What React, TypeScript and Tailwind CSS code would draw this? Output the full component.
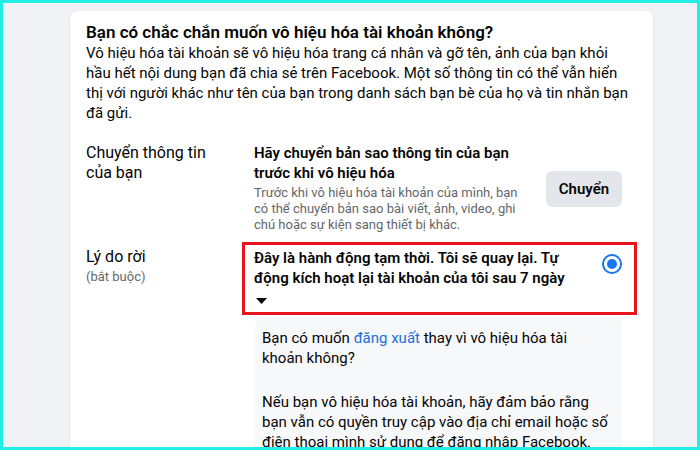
export default function App() {
  return (
    <div className="h-[450px] w-[700px] overflow-hidden border-[3px] border-[#22eee6] bg-[#f0f2f5] font-['Roboto',sans-serif] text-[#050505]">
      <div className="ml-[67px] mt-2 w-[583px] rounded-lg bg-white px-4 pb-10 pt-[10px] shadow-[0_1px_2px_rgba(0,0,0,0.12)]">
        <h2 className="text-[17px] font-semibold leading-[22px]">
          Bạn có chắc chắn muốn vô hiệu hóa tài khoản không?
        </h2>
        <p className="text-[15px] leading-[20px]">
          Vô hiệu hóa tài khoản sẽ vô hiệu hóa trang cá nhân và gỡ tên, ảnh của bạn khỏi
          <br />
          hầu hết nội dung bạn đã chia sẻ trên Facebook. Một số thông tin có thể vẫn hiển
          <br />
          thị với người khác như tên của bạn trong danh sách bạn bè của họ và tin nhắn bạn
          <br />
          đã gửi.
        </p>

        <div className="mt-5 grid grid-cols-[156px_1fr] gap-y-[9px]">
          <div className="text-[16px] leading-[20px]">
            Chuyển thông tin
            <br />
            của bạn
          </div>
          <div className="flex items-center justify-between pl-3 pr-[15px]">
            <div>
              <p className="text-[15px] font-semibold leading-[20px]">
                Hãy chuyển bản sao thông tin của bạn
                <br />
                trước khi vô hiệu hóa
              </p>
              <p className="mt-[2px] text-[13px] leading-[16px] text-[#65676b]">
                Trước khi vô hiệu hóa tài khoản của mình, bạn
                <br />
                có thể chuyển bản sao bài viết, ảnh, video, ghi
                <br />
                chú hoặc sự kiện sang thiết bị khác.
              </p>
            </div>
            <button className="mt-[2px] h-9 w-[76px] rounded-md bg-[#e4e6eb] text-[15px] font-semibold text-[#050505]">
              Chuyển
            </button>
          </div>

          <div className="pt-[5px]">
            <div className="text-[16px] leading-[20px]">Lý do rời</div>
            <div className="text-[13px] leading-[20px] text-[#65676b]">(bắt buộc)</div>
          </div>
          <div>
            <div className="flex justify-between border-[3px] border-[#e8141c] pb-1 pl-[9px] pr-3 pt-[3px]">
              <div className="text-[15px] font-semibold leading-[20px]">
                Đây là hành động tạm thời. Tôi sẽ quay lại. Tự
                <br />
                động kích hoạt lại tài khoản của tôi sau 7 ngày
                <div className="h-5 pt-[10px]">
                  <svg width="11" height="6" viewBox="0 0 11 6" className="ml-[2px] block">
                    <polygon points="0,0 11,0 5.5,6" fill="#050505" />
                  </svg>
                </div>
              </div>
              <div className="mt-[6px] flex h-5 w-5 shrink-0 items-center justify-center rounded-full border-2 border-[#1877f2]">
                <div className="h-[10px] w-[10px] rounded-full bg-[#1877f2]" />
              </div>
            </div>
            <div className="ml-[13px] mr-[15px] mt-1 rounded-lg bg-[#f7f8fa] px-[7px] pb-4 pt-[9px] text-[15px] leading-[20px]">
              <p>
                Bạn có muốn <span className="text-[#216fdb]">đăng xuất</span> thay vì vô hiệu hóa tài
                <br />
                khoản không?
              </p>
              <p className="mt-6">
                Nếu bạn vô hiệu hóa tài khoản, hãy đảm bảo rằng
                <br />
                bạn vẫn có quyền truy cập vào địa chỉ email hoặc số
                <br />
                điện thoại mình sử dụng để đăng nhập Facebook.
              </p>
            </div>
          </div>
        </div>
      </div>
    </div>
  );
}
